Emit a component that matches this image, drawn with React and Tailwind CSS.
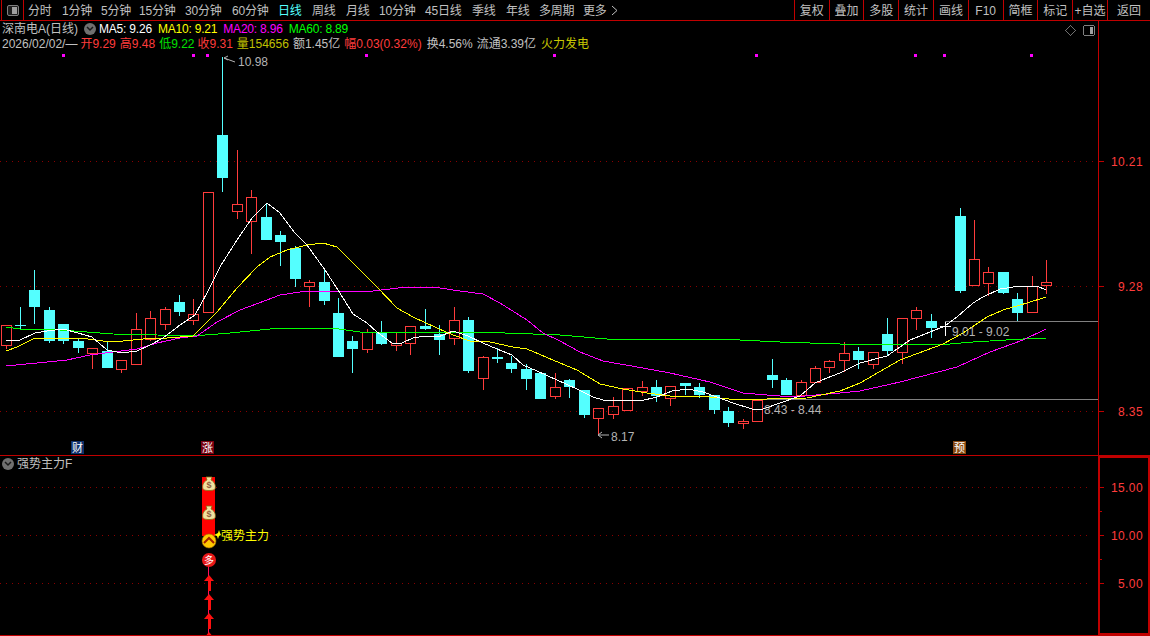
import React from "react";

const RED = "#ff3c3c";
const CYAN = "#54ffff";

// [类型, 实体上, 实体下, 上影, 下影]
const candles = [
  ["r", 325, 345, 325, 349], ["c", 325, 326, 307, 330], ["c", 290, 307, 270, 324], ["c", 310, 341, 307, 343],
  ["c", 324, 341, 324, 344], ["c", 341, 348, 338, 353], ["r", 348, 353, 348, 369], ["c", 351, 368, 342, 368],
  ["r", 360, 369, 360, 373], ["r", 329, 364, 313, 364], ["r", 318, 339, 311, 341], ["r", 309, 324, 307, 330],
  ["c", 302, 312, 295, 316], ["r", 314, 320, 299, 325], ["r", 192, 312, 192, 312], ["c", 135, 178, 57, 192],
  ["r", 204, 211, 150, 219], ["r", 197, 221, 190, 254], ["c", 217, 240, 203, 240], ["c", 235, 242, 231, 266],
  ["c", 248, 279, 246, 287], ["r", 282, 286, 280, 307], ["c", 282, 301, 270, 305], ["c", 313, 357, 298, 357],
  ["c", 341, 349, 336, 373], ["r", 332, 349, 329, 353], ["c", 332, 344, 321, 345], ["r", 343, 345, 333, 351],
  ["r", 326, 343, 326, 355], ["c", 326, 329, 309, 330], ["c", 334, 340, 325, 355], ["r", 320, 338, 307, 345],
  ["c", 320, 371, 317, 373], ["r", 357, 378, 356, 390], ["c", 357, 359, 348, 363], ["c", 363, 369, 356, 373],
  ["c", 369, 379, 364, 390], ["c", 373, 399, 373, 399], ["r", 387, 396, 373, 399], ["c", 380, 387, 379, 398],
  ["c", 390, 415, 390, 418], ["r", 408, 418, 408, 435], ["r", 406, 414, 397, 419], ["r", 388, 410, 388, 410],
  ["r", 387, 391, 381, 396], ["c", 387, 396, 380, 402], ["r", 386, 398, 386, 406], ["c", 383, 386, 383, 395],
  ["c", 387, 395, 383, 398], ["c", 395, 410, 395, 414], ["c", 411, 423, 407, 427], ["r", 421, 423, 419, 429],
  ["r", 400, 421, 400, 421], ["c", 375, 380, 359, 388], ["c", 380, 395, 378, 395], ["r", 382, 395, 380, 395],
  ["r", 368, 382, 366, 382], ["r", 361, 367, 360, 373], ["r", 353, 360, 342, 372], ["c", 351, 360, 347, 369],
  ["r", 352, 364, 352, 369], ["c", 334, 351, 318, 355], ["r", 318, 352, 318, 364], ["r", 310, 318, 307, 330],
  ["c", 321, 328, 314, 338], ["w", 326, 326, 322, 336], ["c", 216, 291, 208, 293], ["r", 259, 285, 220, 285],
  ["r", 272, 283, 267, 296], ["c", 272, 293, 272, 294], ["c", 299, 313, 293, 321], ["r", 286, 312, 276, 312],
  ["r", 282, 285, 260, 294],
];

const ma5 = "6,341 20,340 35,333 47,331 63,329 78,333 92,337 107,350 122,353 137,351 150,345 163,338 180,325 195,315 207,293 220,267 223,262 237,240 252,218 267,203 280,213 295,233 307,245 325,270 338,290 353,314 367,323 377,332 392,343 402,343 413,338 425,336 438,337 453,331 468,336 483,343 497,349 512,355 523,365 537,371 557,380 577,389 593,397 603,400 640,401 657,397 672,391 688,389 703,392 717,397 733,403 752,409 763,409 780,403 800,396 815,383 827,378 840,373 860,363 887,356 910,340 945,326 957,317 973,303 983,297 1000,289 1020,286 1037,286 1046,290";
const ma10 = "6,351 17,347 33,339 57,338 80,338 103,341 123,341 143,339 167,338 193,336 202,327 217,312 237,288 257,267 270,257 287,250 307,245 323,243 337,247 350,260 360,270 377,287 397,308 413,317 437,328 453,335 470,341 490,342 513,347 527,349 560,363 577,370 600,384 623,389 647,393 670,396 700,396 720,398 737,400 767,399 807,398 840,391 860,383 900,360 943,344 963,333 987,317 1003,310 1027,303 1046,297";
const ma20 = "6,366 47,362 67,360 90,355 113,352 137,349 157,343 180,338 197,336 217,322 240,310 267,300 280,295 300,292 323,291 373,291 407,287 433,287 460,291 483,294 500,303 527,320 543,333 560,341 580,352 603,361 643,368 670,373 710,382 743,393 767,395 793,397 840,393 860,391 900,382 957,367 990,352 1023,340 1046,329";
const ma60 = "6,327 20,329 43,329 60,330 87,332 113,334 157,335 193,336 230,333 280,328 332,328 360,332 440,332 505,333 560,335 607,339 720,339 780,342 840,344 950,344 973,342 1023,339 1046,338";

const dots = [63, 193, 207, 366, 554, 756, 915, 944, 1031];
const tabs = [
  ["分时", "w-[34px]"], ["1分钟", "w-[39px]"], ["5分钟", "w-[38px]"], ["15分钟", "w-[46px]"], ["30分钟", "w-[47px]"],
  ["60分钟", "w-[46px]"], ["日线", "w-[34px] text-[#54ffff]"], ["周线", "w-[34px]"], ["月线", "w-[33px]"],
  ["10分钟", "w-[46px]"], ["45日线", "w-[47px]"], ["季线", "w-[34px]"], ["年线", "w-[33px]"], ["多周期", "w-[44px]"], ["更多", "w-[28px]"],
];
const tools = ["复权", "叠加", "多股", "统计", "画线", "F10", "简框", "标记", "+自选"];

function Candle({ d, i }) {
  const [type, top, bottom, high, low] = d;
  const x = Math.round(5.5 + 14.455 * i);
  if (type === "w") {
    return (
      <g fill="#ffffff">
        <rect x={x - 5} y={top} width={11} height={1} />
        <rect x={x} y={high} width={1} height={low - high} />
      </g>
    );
  }
  if (type === "c") {
    return (
      <g fill={CYAN}>
        <rect x={x} y={high} width={1} height={low - high} />
        <rect x={x - 5} y={top} width={11} height={bottom - top} />
      </g>
    );
  }
  return (
    <g>
      <rect x={x} y={high} width={1} height={top - high} fill={RED} />
      <rect x={x} y={bottom} width={1} height={low - bottom} fill={RED} />
      <rect x={x - 5 + 0.5} y={top + 0.5} width={10} height={bottom - top} fill="none" stroke={RED} />
    </g>
  );
}

function Line({ points, color }) {
  return <polyline points={points} fill="none" stroke={color} strokeWidth="1" shapeRendering="crispEdges" />;
}

function GridLine({ y, to = 1098 }) {
  return <line x1="0" x2={to} y1={y + 0.5} y2={y + 0.5} stroke="#8a0000" strokeDasharray="1 5" shapeRendering="crispEdges" />;
}

function Marker({ x, label, bg }) {
  return (
    <g>
      <rect x={x - 6} y="441" width="13" height="13" fill={bg} />
      <text x={x + 0.5} y="452" textAnchor="middle" fontSize="11" fill="#ffffff">{label}</text>
    </g>
  );
}

function Bag({ y }) {
  return (
    <g transform={`translate(209 ${y})`}>
      <path d="M-3 -7 L3 -7 L2 -4 C6 -2 7 2 6 5 C5 7 -5 7 -6 5 C-7 2 -6 -2 -2 -4 Z" fill="#f0e2a0" stroke="#8a6a10" strokeWidth="0.8" />
      <text y="4" textAnchor="middle" fontSize="9" fontWeight="700" fill="#906040">$</text>
    </g>
  );
}

function UpArrow({ y }) {
  return (
    <g fill="#ff1010">
      <path d={`M209 ${y} L214 ${y + 6} L204 ${y + 6} Z`} />
      <rect x="208" y={y + 6} width="3" height="10" />
    </g>
  );
}

function MainChart() {
  return (
    <svg className="block" width="1098" height="434" viewBox="0 21 1098 434" shapeRendering="crispEdges">
      {dots.map((x) => (
        <rect key={x} x={x - 1} y="54" width="3" height="3" fill="#ff00ff" />
      ))}
      <GridLine y={161} />
      <GridLine y={286} />
      <GridLine y={411} />
      <line x1="945" x2="1098" y1="321.5" y2="321.5" stroke="#808080" />
      <line x1="752" x2="1098" y1="399.5" y2="399.5" stroke="#808080" />
      {candles.map((d, i) => (
        <Candle key={i} d={d} i={i} />
      ))}
      <Line points={ma60} color="#00ff00" />
      <Line points={ma20} color="#ff00ff" />
      <Line points={ma10} color="#ffff00" />
      <Line points={ma5} color="#ffffff" />

      <g fontSize="12" fill="#b4b4b4" shapeRendering="auto">
        <path d="M224 58 L235 62 M224 58 L228 56 M224 58 L228 60" stroke="#b4b4b4" fill="none" />
        <text x="238" y="66">10.98</text>
        <path d="M598 435 L609 435 M598 435 L602 432 M598 435 L602 438" stroke="#b4b4b4" fill="none" />
        <text x="611" y="441">8.17</text>
        <text x="764" y="414">8.43 - 8.44</text>
        <text x="952" y="336">9.01 - 9.02</text>
      </g>
      <Marker x={77} label="财" bg="#10306a" />
      <Marker x={207} label="涨" bg="#7a0010" />
      <Marker x={959} label="预" bg="#8a4a10" />

      {/* 右上角小图标 */}
      <path d="M1070.5 25.5 L1075.5 30.5 L1070.5 35.5 L1065.5 30.5 Z" fill="none" stroke="#707070" />
      <rect x="1083.5" y="25.5" width="11" height="10" rx="2" fill="none" stroke="#808080" />
      <rect x="1090" y="27" width="3" height="7" fill="#a0a0a0" />
    </svg>
  );
}

function SubChart() {
  return (
    <svg className="block" width="1098" height="179" viewBox="0 456 1098 179">
      <g shapeRendering="crispEdges">
        <GridLine y={487} to={1092} />
        <GridLine y={535} to={1092} />
        <GridLine y={583} to={1092} />
        <rect x="202" y="477" width="13" height="59" fill="#ff0000" />
        <rect x="208" y="566" width="1" height="70" fill="#ff1060" />
      </g>
      <UpArrow y={575} />
      <UpArrow y={594} />
      <UpArrow y={613} />
      <UpArrow y={632} />
      <Bag y={484} />
      <Bag y={513} />
      <circle cx="209" cy="541" r="7" fill="#ffc800" stroke="#a07000" strokeWidth="0.6" />
      <path d="M204 543 L209 538 L214 543" fill="none" stroke="#a02000" strokeWidth="2" />
      <circle cx="209" cy="560" r="7" fill="#e81818" />
      <text x="209" y="564" textAnchor="middle" fontSize="10" fill="#ffffff">多</text>
      <path d="M214 535 L218 533 L219 530 L220 533 L221 535 L219 536 L218 539 L217 536 Z" fill="#ffff00" />
      <text x="221" y="540" fontSize="12" fill="#ffff00">强势主力</text>
    </svg>
  );
}

function Axis({ ticks, viewBox, height, minor = [] }) {
  return (
    <svg className="block" width="50" height={height} viewBox={viewBox}>
      {ticks.map(([y, label]) => (
        <g key={label}>
          <rect x="1099" y={y} width="5" height="1" fill="#c00000" shapeRendering="crispEdges" />
          <text x="1143" y={y + 5} textAnchor="end" fontSize="12" letterSpacing="0.4" fill={RED}>{label}</text>
        </g>
      ))}
      {minor.map((y) => (
        <rect key={y} x="1099" y={y} width="3" height="1" fill="#c00000" shapeRendering="crispEdges" />
      ))}
    </svg>
  );
}

function Chevron() {
  return (
    <span className="flex h-[12px] w-[12px] items-center justify-center rounded-full bg-[#707070]">
      <svg width="8" height="6" viewBox="0 0 8 6">
        <path d="M1 1 L4 4 L7 1" fill="none" stroke="#1a1a1a" strokeWidth="1.5" />
      </svg>
    </span>
  );
}

export default function App() {
  return (
    <div className="flex h-[636px] w-[1150px] flex-col overflow-hidden bg-black font-['Liberation_Sans','Noto_Sans_CJK_SC',sans-serif] text-[12px] leading-none text-[#c0c0c0]">
      {/* 顶部周期栏 */}
      <div className="flex h-[21px] shrink-0 items-center border-b border-[#c00000]">
        <div className="ml-[1px] flex h-full w-[23px] items-center justify-center border-x border-[#c00000]">
          <span className="flex h-[11px] w-[12px] justify-end rounded-[2px] border border-[#808080] bg-[#202020] p-[1px]">
            <span className="h-full w-[5px] bg-[#a0a0a0]" />
          </span>
        </div>
        <div className="ml-[4px] flex items-center pt-[1px]">
          {tabs.map(([t, cls]) => (
            <span key={t} className={`${cls} whitespace-nowrap tracking-[-0.2px]`}>{t}</span>
          ))}
          <svg width="7" height="11" viewBox="0 0 7 11">
            <path d="M1 1 L6 5.5 L1 10" fill="none" stroke="#c0c0c0" />
          </svg>
        </div>
        <div className="ml-auto flex h-full">
          {tools.map((t) => (
            <span key={t} className="flex h-full w-[34.8px] items-center justify-center border-l border-[#c00000] pt-[1px] whitespace-nowrap">{t}</span>
          ))}
          <span className="flex h-full w-[43px] items-center justify-center border-l border-[#c00000] pt-[1px]">返回</span>
        </div>
      </div>

      {/* 主图 */}
      <div className="relative flex h-[435px] shrink-0 border-b border-[#c00000]">
        <div className="absolute left-[2px] top-[2px] flex flex-col gap-[3px]">
          <div className="flex h-[12px] items-center">
            <span className="w-[82px] whitespace-nowrap">深南电A(日线)</span>
            <Chevron />
            <span className="ml-[3px] tracking-[-0.2px] text-white">MA5: 9.26</span>
            <span className="ml-[6px] tracking-[-0.2px] text-[#ffff00]">MA10: 9.21</span>
            <span className="ml-[6px] tracking-[-0.2px] text-[#ff00ff]">MA20: 8.96</span>
            <span className="ml-[6px] tracking-[-0.2px] text-[#00ff00]">MA60: 8.89</span>
          </div>
          <div className="flex h-[12px] items-center whitespace-nowrap">
            <span>2026/02/02/—</span>
            <span className="ml-[3px] text-[#ff3c3c]">开9.29</span>
            <span className="ml-[4px] text-[#ff3c3c]">高9.48</span>
            <span className="ml-[4px] text-[#00e000]">低9.22</span>
            <span className="ml-[3px] text-[#ff3c3c]">收9.31</span>
            <span className="ml-[4px] text-[#c0c000]">量154656</span>
            <span className="ml-[4px]">额1.45亿</span>
            <span className="ml-[4px] text-[#ff3c3c]">幅0.03(0.32%)</span>
            <span className="ml-[5px]">换4.56%</span>
            <span className="ml-[4px]">流通3.39亿</span>
            <span className="ml-[5px] text-[#c8c800]">火力发电</span>
          </div>
        </div>
        <MainChart />
        <div className="border-l border-[#c00000]">
          <Axis height={434} viewBox="1099 21 50 434" ticks={[[161, "10.21"], [286, "9.28"], [411, "8.35"]]} />
        </div>
      </div>

      {/* 副图 */}
      <div className="relative flex h-[180px] shrink-0 border-b border-[#c00000]">
        <div className="absolute left-[2px] top-[2px] flex h-[12px] items-center gap-[3px]">
          <Chevron />
          <span>强势主力F</span>
        </div>
        <SubChart />
        <div className="h-full w-[52px] border-2 border-[#c00000]">
          <Axis height={175} viewBox="1100 458 50 175" ticks={[[487, "15.00"], [535, "10.00"], [583, "5.00"]]} minor={[511, 559]} />
        </div>
      </div>
    </div>
  );
}
